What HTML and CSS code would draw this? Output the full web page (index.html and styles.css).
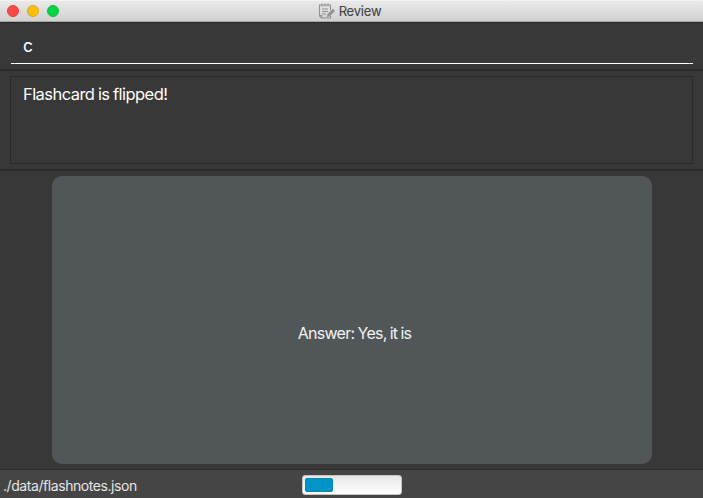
FILE: index.html
```html
<!DOCTYPE html>
<html lang="en">
<head>
<meta charset="utf-8">
<title>Review</title>
<link rel="stylesheet" href="styles.css">
</head>
<body>
<div class="window">
  <header class="titlebar">
    <div class="lights"><i class="light close"></i><i class="light minimize"></i><i class="light zoom"></i></div>
    <div class="title">
      <svg class="note-icon" width="17" height="17" viewBox="0 0 17 17" fill="none" stroke="#929292" stroke-width="1.1">
        <path d="M12.5 7V2H1.5v11l2 2h9v-2M1.5 12.5h2.3V15M4 .5v3M7 .5v3M10 .5v3M4 6h6M4 8.5h6M4 11h4"/>
        <path d="M9.5 13.5l.6-2.1 4.8-4.9 1.4 1.5-4.7 4.8z" fill="#999"/>
      </svg>
      <span class="title-text">Review</span>
    </div>
  </header>
  <section class="command"><div class="field"><span class="command-text">c</span></div></section>
  <section class="result"><div class="result-box"><span class="result-text">Flashcard is flipped!</span></div></section>
  <main class="review"><div class="card"><span class="card-text">Answer: Yes, it is</span></div></main>
  <footer class="statusbar">
    <div class="path"><span class="path-text">./data/flashnotes.json</span></div>
    <div class="progress"><div class="bar"></div></div>
    <div class="spacer"></div>
  </footer>
</div>
</body>
</html>
```
FILE: styles.css
```css
* { box-sizing: border-box; }
body { margin: 0; background: #383838; font-family: Inter, sans-serif; color: #fff; }
.window { width: 703px; height: 498px; display: flex; flex-direction: column; overflow: hidden; white-space: nowrap; }
.titlebar { height: 22px; flex: none; display: grid; grid-template-columns: 1fr auto 1fr; background: linear-gradient(#e9e9e9, #d1d1d1); border-top: 1px solid #f3f3f3; border-bottom: 1px solid #a8a8a8; }
.lights { display: flex; gap: 8px; padding: 4px 0 0 7px; }
.light { width: 12px; height: 12px; border-radius: 50%; border: 1px solid; }
.close { background: #ff4645; border-color: #e33e3d; }
.minimize { background: #ffc000; border-color: #e2a51a; }
.zoom { background: #00d745; border-color: #18b83a; }
.title { display: flex; align-items: flex-start; gap: 4px; margin-right: 4px; }
.note-icon { margin-top: 2px; }
.title-text { font-size: 13px; line-height: 20px; letter-spacing: -0.2px; color: #444; -webkit-text-stroke: 0.1px #444; }
.command { height: 49px; flex: none; padding: 1px 10px 0 11px; border-top: 1px solid #292929; border-bottom: 2px solid #2b2b2b; }
.field { height: 40px; border-bottom: 1px solid #fff; padding: 11px 0 0 12px; }
.command-text { display: block; font-size: 17.5px; line-height: 22px; }
.result { height: 100px; flex: none; padding: 5px 10px; border-bottom: 2px solid #2b2b2b; }
.result-box { height: 88px; border: 1px solid #292929; padding: 6px 12px; }
.result-text { display: block; font-size: 16.5px; line-height: 22px; letter-spacing: -0.56px; word-spacing: -0.5px; }
.review { height: 298px; flex: none; padding: 5px 51px 0 52px; }
.card { height: 288px; border-radius: 10px; background: #515658; display: flex; align-items: center; justify-content: center; padding: 25px 0 0 5px; }
.card-text { font-size: 16px; line-height: 22px; letter-spacing: -0.7px; word-spacing: -0.8px; color: #f2f2f2; }
.statusbar { height: 29px; flex: none; display: grid; grid-template-columns: 302px 100px 1fr; background: #454545; border-top: 1px solid #2b2b2b; }
.path { padding: 5px 0 0 3px; }
.path-text { display: block; font-size: 14px; line-height: 22px; letter-spacing: -0.43px; color: #e6e6e6; }
.progress { height: 20px; margin-top: 5px; padding: 2px; border: 1px solid #c4c4c4; border-radius: 3px; background: linear-gradient(#e7e7e7, #fff); }
.bar { width: 28px; height: 14px; border-radius: 2px; background: #0093c5; border: 1px solid #0088b8; }
```
